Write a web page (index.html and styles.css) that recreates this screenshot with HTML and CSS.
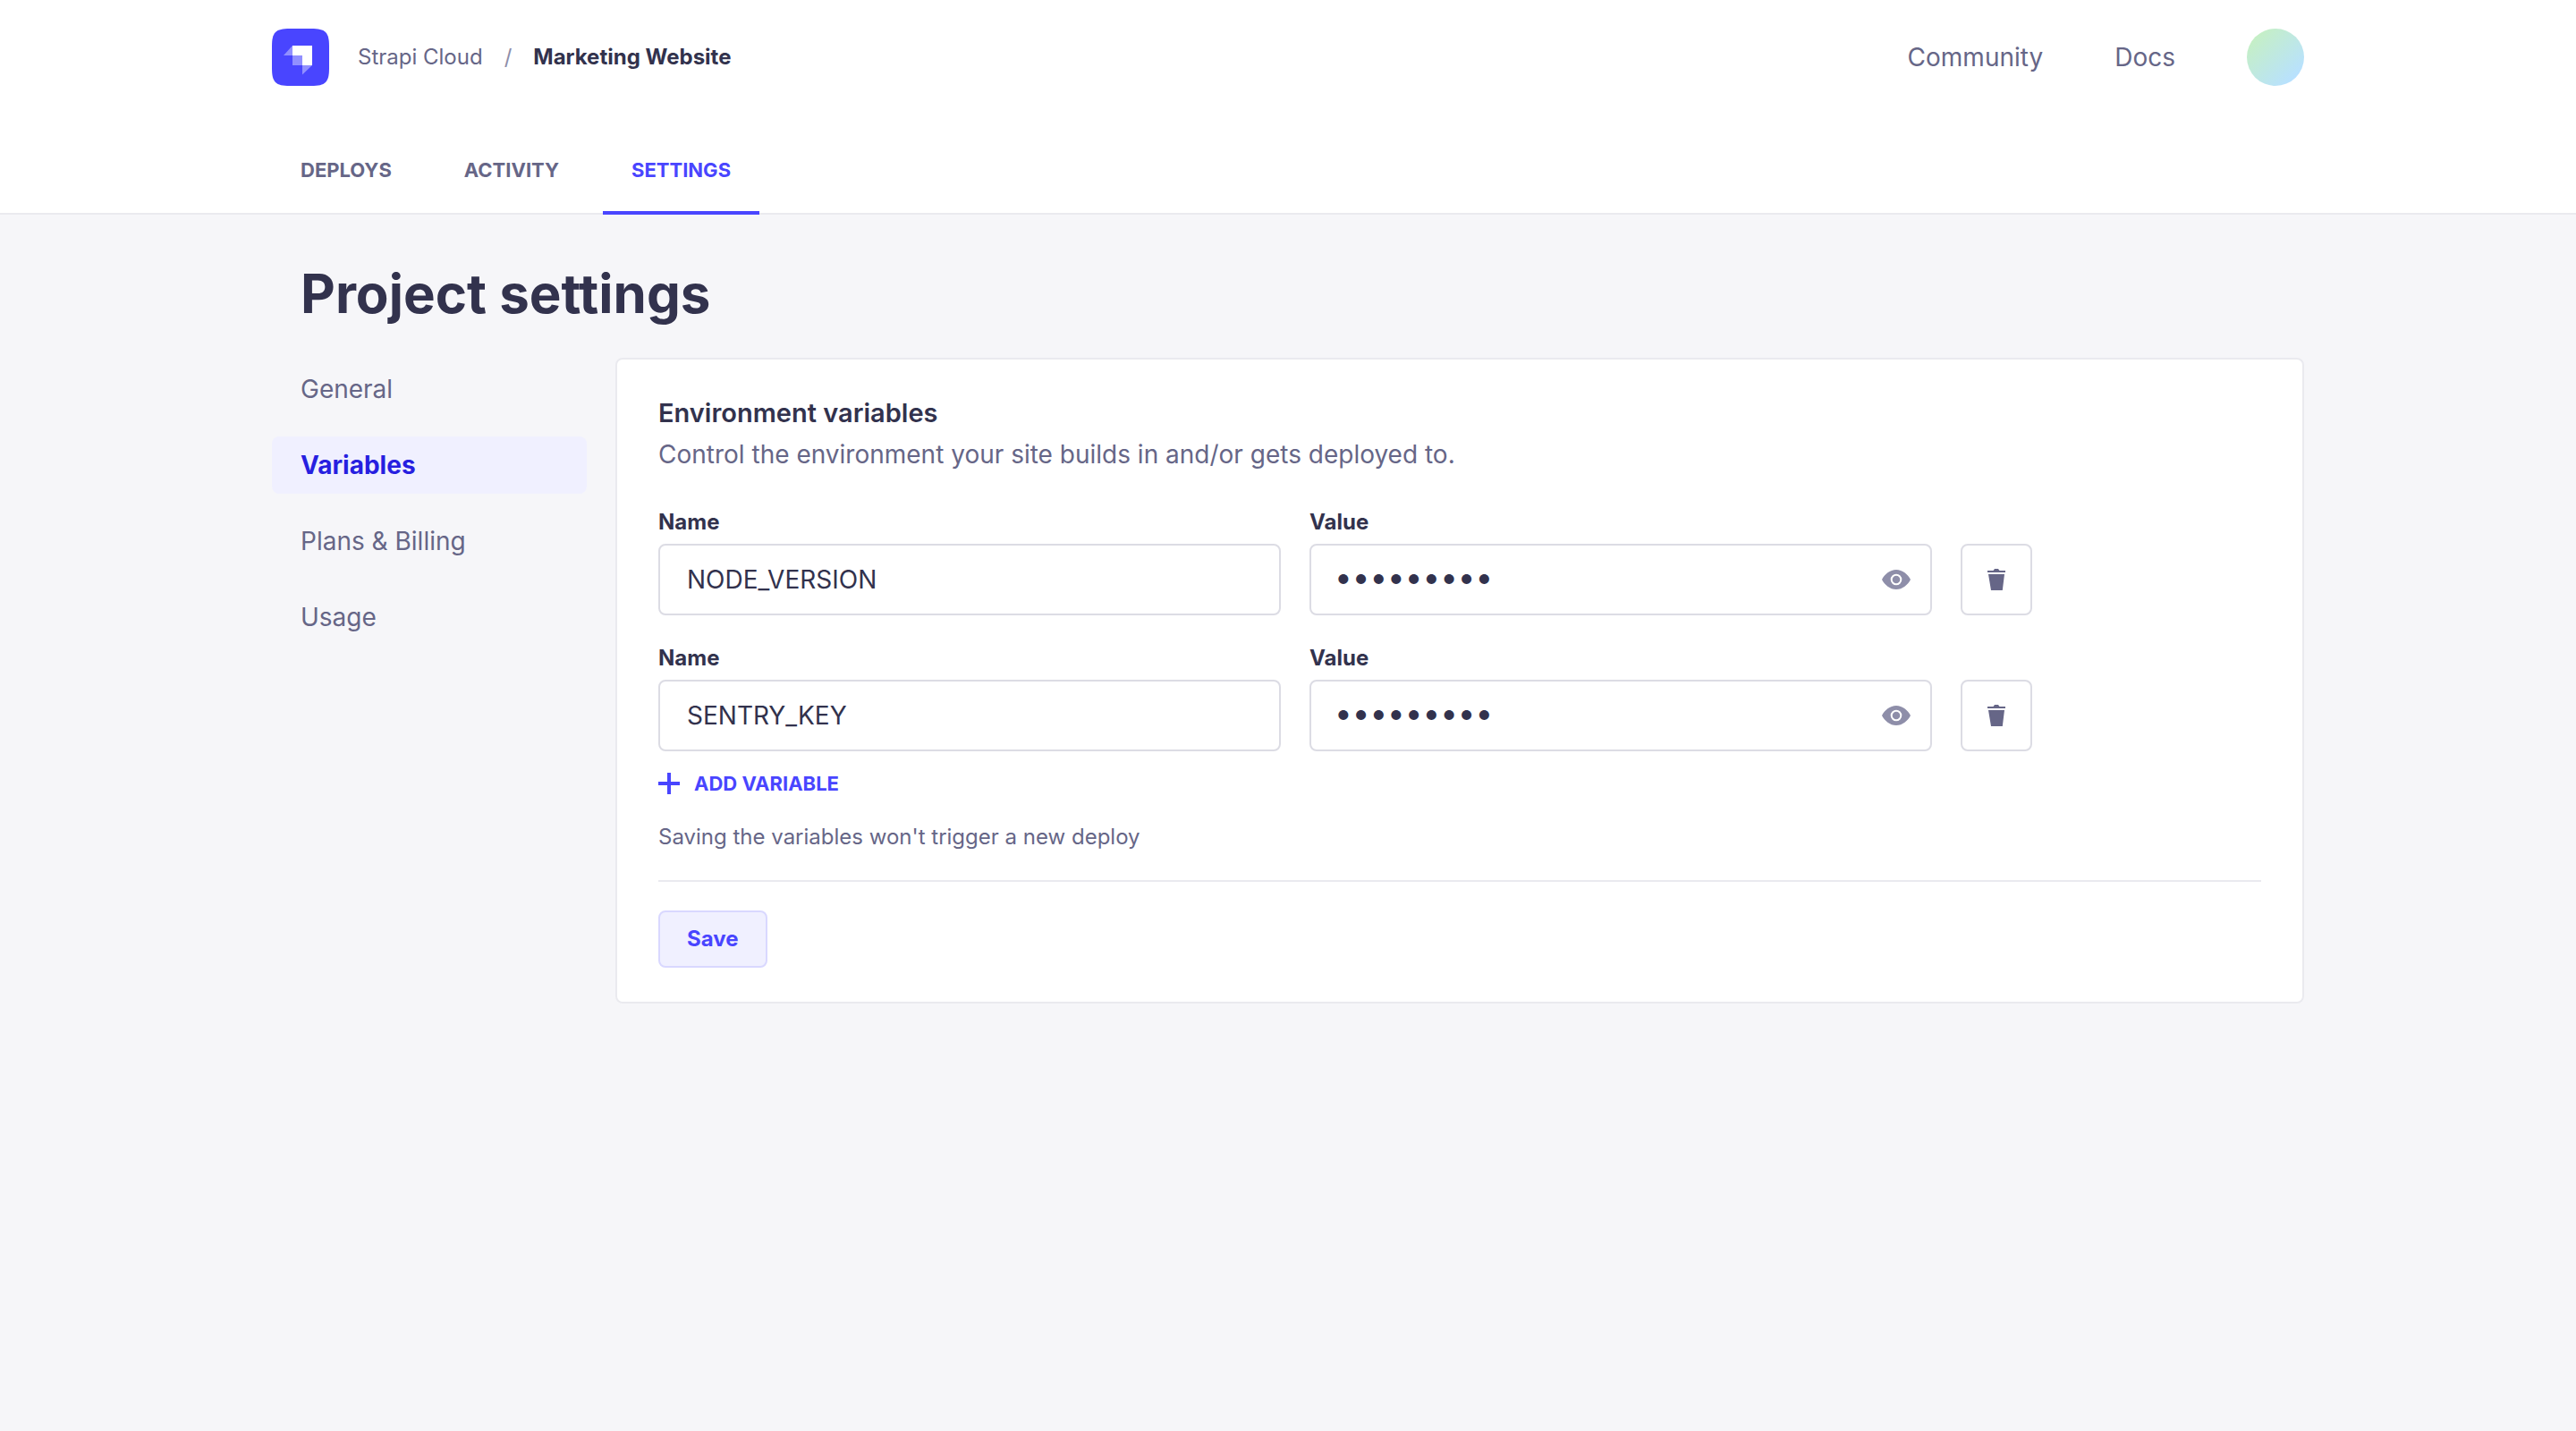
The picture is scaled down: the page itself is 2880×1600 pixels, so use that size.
FILE: index.html
```html
<!DOCTYPE html>
<html lang="en">
<head>
<meta charset="utf-8">
<meta name="viewport" content="width=device-width, initial-scale=1">
<title>Project settings</title>
<link rel="stylesheet" href="styles.css">
</head>
<body>
<svg class="sprite" aria-hidden="true">
  <symbol id="icon-eye" viewBox="0 0 32 22"><path fill-rule="evenodd" d="M16 0C9 0 3 5 0 11c3 6 9 11 16 11s13-5 16-11C29 5 23 0 16 0Zm0 17.300a6.300 6.300 0 1 1 0-12.600 6.300 6.300 0 0 1 0 12.600Z"/><circle cx="16" cy="11" r="4.300"/></symbol>
  <symbol id="icon-trash" viewBox="0 0 20 24"><path d="M0 2h6.500L8 0h4l1.500 2H20v2H0ZM1 6h18l-2.200 18H4Z"/></symbol>
</svg>
<header class="header">
  <div class="container topbar">
    <a class="logo" href="#" aria-label="Strapi Cloud home">
      <svg viewBox="0 0 64 64" aria-hidden="true">
        <path fill="#4945ff" d="M0 20C0 4 4 0 20 0h24c16 0 20 4 20 20v24c0 16-4 20-20 20H20C4 64 0 60 0 44Z"/>
        <path fill="#fff" d="M23 19h22v22H34V30H23Z"/>
        <path fill="#918fff" d="M23 19v11H13ZM34 41h11L34 51.500ZM23 30h11v11H23Z"/>
      </svg>
    </a>
    <nav class="breadcrumb" aria-label="Breadcrumb">
      <a href="#">Strapi Cloud</a>
      <span class="slash">/</span>
      <strong>Marketing Website</strong>
    </nav>
    <nav class="links" aria-label="Resources">
      <a href="#">Community</a>
      <a href="#">Docs</a>
      <button class="avatar" type="button" aria-label="Account"></button>
    </nav>
  </div>
  <nav class="container tabs" aria-label="Project">
    <a href="#">DEPLOYS</a>
    <a href="#">ACTIVITY</a>
    <a class="active" href="#" aria-current="page">SETTINGS</a>
  </nav>
</header>
<main class="container">
  <h1>Project settings</h1>
  <div class="columns">
    <nav class="side" aria-label="Settings">
      <a href="#">General</a>
      <a class="active" href="#" aria-current="page">Variables</a>
      <a href="#">Plans &amp; Billing</a>
      <a href="#">Usage</a>
    </nav>
    <form class="card">
      <h2>Environment variables</h2>
      <p class="lead">Control the environment your site builds in and/or gets deployed to.</p>
      <div class="variables">
        <div class="variable">
          <div class="field">
            <label for="name-1">Name</label>
            <input id="name-1" type="text" value="NODE_VERSION">
          </div>
          <div class="field">
            <label for="value-1">Value</label>
            <div class="secret">
              <input id="value-1" type="password" value="productio" autocomplete="off">
              <button type="button" aria-label="Show value"><svg class="eye" aria-hidden="true"><use href="#icon-eye"/></svg></button>
            </div>
          </div>
          <button class="delete" type="button" aria-label="Delete variable"><svg aria-hidden="true"><use href="#icon-trash"/></svg></button>
        </div>
        <div class="variable">
          <div class="field">
            <label for="name-2">Name</label>
            <input id="name-2" type="text" value="SENTRY_KEY">
          </div>
          <div class="field">
            <label for="value-2">Value</label>
            <div class="secret">
              <input id="value-2" type="password" value="productio" autocomplete="off">
              <button type="button" aria-label="Show value"><svg class="eye" aria-hidden="true"><use href="#icon-eye"/></svg></button>
            </div>
          </div>
          <button class="delete" type="button" aria-label="Delete variable"><svg aria-hidden="true"><use href="#icon-trash"/></svg></button>
        </div>
      </div>
      <button class="add" type="button">
        <svg viewBox="0 0 24 24" aria-hidden="true"><path d="M10 0h4v10h10v4H14v10h-4V14H0v-4h10Z"/></svg>
        ADD VARIABLE
      </button>
      <p class="note">Saving the variables won't trigger a new deploy</p>
      <hr>
      <button class="save" type="submit">Save</button>
    </form>
  </div>
</main>
</body>
</html>
```
FILE: styles.css
```css
* {
  box-sizing: border-box;
}

body {
  margin: 0;
  background: #f6f6f9;
  color: #32324d;
  font-family: Inter, "Liberation Sans", sans-serif;
  font-size: 28px;
  line-height: 40px;
}

a {
  color: #666687;
  text-decoration: none;
}

button,
input {
  margin: 0;
  padding: 0;
  border: 0;
  background: none;
  color: inherit;
  font: inherit;
}

button {
  cursor: pointer;
}

svg {
  display: block;
  fill: currentColor;
}

.sprite {
  position: absolute;
  width: 0;
  height: 0;
}

.container {
  width: calc(100% - 64px);
  max-width: 2272px;
  margin: 0 auto;
}

.header {
  background: #fff;
  box-shadow: inset 0 -2px #eaeaef;
}

.topbar {
  display: flex;
  align-items: center;
  padding: 32px 0;
}

.logo svg {
  width: 64px;
  height: 64px;
}

.breadcrumb {
  display: flex;
  gap: 24px;
  margin-left: 32px;
  font-size: 24px;
  line-height: 32px;
}

.slash {
  color: #8e8ea9;
}

.links {
  display: flex;
  align-items: center;
  gap: 80px;
  margin-left: auto;
}

.avatar {
  width: 64px;
  height: 64px;
  border-radius: 50%;
  background: linear-gradient(135deg, #c6f0c2 10%, #b8e1ff 85%);
}

.tabs {
  display: flex;
  gap: 17px;
}

.tabs a {
  padding: 46px 32px 30px;
  border-bottom: 4px solid transparent;
  font-size: 22px;
  font-weight: 700;
  line-height: 32px;
}

.tabs .active {
  border-color: #4945ff;
  color: #4945ff;
}

h1 {
  margin: 0;
  padding: 48px 32px 32px;
  font-size: 60px;
  font-weight: 700;
  line-height: 80px;
}

.columns {
  display: flex;
  align-items: flex-start;
  gap: 32px;
}

.side {
  display: flex;
  flex: 0 0 352px;
  flex-direction: column;
  gap: 21px;
  padding-top: 3px;
}

.side a {
  padding: 12px 32px;
  border-radius: 8px;
}

.side .active {
  background: #f0f0ff;
  color: #271fe0;
  font-weight: 700;
}

.card {
  flex: 1;
  min-width: 0;
  padding: 38px 46px;
  border: 2px solid #eaeaef;
  border-radius: 8px;
  background: #fff;
}

h2 {
  margin: 0;
  font-size: 29px;
  font-weight: 600;
  line-height: 44px;
}

.lead {
  margin: 4px 0 40px;
  color: #666687;
}

.variables {
  display: flex;
  flex-direction: column;
  gap: 32px;
  margin-bottom: 24px;
}

.variable {
  display: flex;
  align-items: flex-end;
  gap: 32px;
}

.field {
  display: flex;
  flex: 0 1 696px;
  flex-direction: column;
  gap: 8px;
}

.field label {
  font-size: 24px;
  font-weight: 700;
  line-height: 32px;
}

.field input {
  width: 100%;
  height: 80px;
  padding: 0 30px;
  border: 2px solid #dcdce4;
  border-radius: 8px;
  background: #fff;
}

.secret {
  position: relative;
}

.field .secret input {
  padding: 0 80px 6px 26px;
  font-size: 35px;
}

.secret button {
  position: absolute;
  top: 0;
  right: 0;
  height: 80px;
  padding: 0 24px;
  color: #8e8ea9;
}

.eye {
  width: 32px;
  height: 22px;
}

.delete {
  display: grid;
  place-items: center;
  flex: none;
  width: 80px;
  height: 80px;
  border: 2px solid #dcdce4;
  border-radius: 8px;
  color: #666687;
}

.delete svg {
  width: 20px;
  height: 24px;
}

.add {
  display: flex;
  align-items: center;
  gap: 16px;
  color: #4945ff;
  font-size: 22px;
  font-weight: 700;
  line-height: 24px;
}

.add svg {
  width: 24px;
  height: 24px;
}

.note {
  margin: 32px 0;
  color: #666687;
  font-size: 24px;
  line-height: 32px;
}

hr {
  height: 2px;
  margin: 0 0 32px;
  border: 0;
  background: #eaeaef;
}

.save {
  padding: 14px 30px;
  border: 2px solid #d9d8ff;
  border-radius: 8px;
  background: #f0f0ff;
  color: #4945ff;
  font-size: 24px;
  font-weight: 700;
  line-height: 32px;
}
```
